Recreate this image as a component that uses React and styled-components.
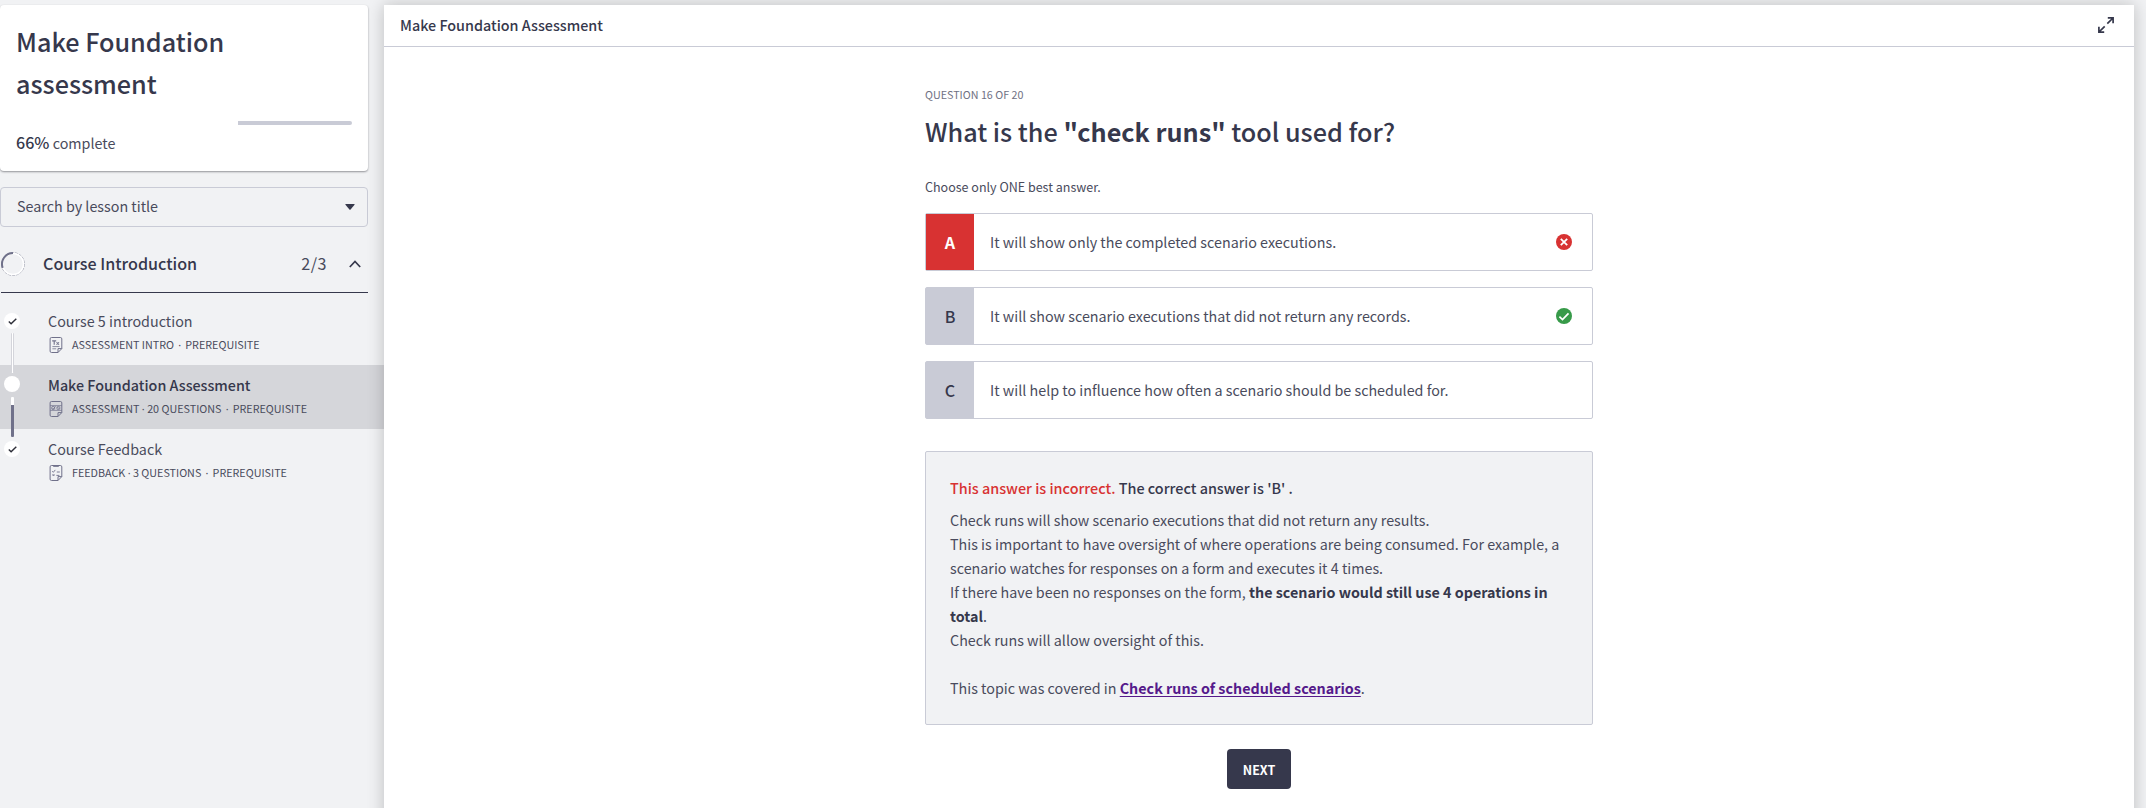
import React from "react";
import styled, { createGlobalStyle } from "styled-components";

const ink = "#36384c";
const body = "#494b5c";
const line = "#c9cbd6";
const paper = "#f1f2f4";

const GlobalStyle = createGlobalStyle`
  *, *::before, *::after { box-sizing: border-box; }
  body {
    margin: 0;
    background: ${paper};
    color: ${body};
    font-family: "Noto Sans CJK SC", "Noto Sans", sans-serif;
    font-size: 14.32px;
    line-height: 24px;
    overflow: hidden;
  }
`;

const Page = styled.div`
  display: flex;
  height: 808px;
  padding-top: 5px;
  overflow: hidden;
`;

const Sidebar = styled.aside`
  width: 384px;
  flex: none;
`;

const CourseCard = styled.section`
  width: 368px;
  height: 166px;
  padding: 15px 16px 0;
  background: #fff;
  border-radius: 4px;
  box-shadow: 0 1px 2px rgba(30, 32, 40, 0.45);
`;

const CourseTitle = styled.h1`
  width: 240px;
  margin: 0;
  color: ${ink};
  font-size: 25.2px;
  font-weight: 500;
  line-height: 42px;
`;

const ProgressTrack = styled.div`
  display: flex;
  justify-content: flex-end;
  height: 4px;
  margin-top: 17px;
`;

const ProgressRest = styled.div`
  width: 34%;
  background: ${line};
  border-radius: 0 2px 2px 0;
`;

const ProgressText = styled.p`
  margin: 6px 0 0;
  line-height: 24px;

  strong {
    color: ${ink};
    font-size: 16.1px;
    font-weight: 500;
    line-height: 1;
  }
`;

const SearchBox = styled.div`
  display: flex;
  align-items: center;
  justify-content: space-between;
  width: 368px;
  height: 40px;
  margin-top: 16px;
  padding: 0 12px 2px 16px;
  border: 1px solid ${line};
  border-radius: 4px;

  svg { margin-top: 1px; }
`;

const ChapterHeader = styled.header`
  display: flex;
  align-items: center;
  width: 367px;
  height: 66px;
  margin-left: 1px;
  padding: 8px 7px 0 0;
  border-bottom: 1px solid ${ink};
  font-size: 16.1px;
`;

const ChapterTitle = styled.h2`
  flex: 1;
  margin: 0 0 1px 18px;
  color: ${ink};
  font-size: inherit;
  font-weight: 500;
`;

const ChapterCount = styled.span`
  margin: 0 22px 1px 0;
  letter-spacing: 0.5px;
`;

const LessonList = styled.ul`
  margin: 8px 0 0;
  padding: 0;
  list-style: none;
`;

const Lesson = styled.li`
  display: flex;
  height: 64px;
  background: ${(p) => (p.$active ? "#d5d6da" : "transparent")};
`;

const LessonRail = styled.div`
  display: flex;
  flex-direction: column;
  align-items: center;
  flex: none;
  width: 24px;
  margin-right: 24px;
  padding-top: ${(p) => p.$top}px;
`;

const Dot = styled.div`
  display: flex;
  align-items: center;
  justify-content: center;
  width: 16px;
  height: 16px;
  flex: none;
  border-radius: 50%;
  background: #fff;
`;

const Connector = styled.div`
  position: relative;
  z-index: 1;
  flex: none;
  width: 3px;
  height: 40px;
  margin-top: ${(p) => (p.$dark ? 5 : 4)}px;
  margin-left: 1px;
  border-radius: 1px;
  ${(p) =>
    p.$dark
      ? "background: linear-gradient(#fff 0 8px, #70718a 8px);"
      : "background: #fff; border: solid #d4d5db; border-width: 0 0.6px;"}
`;

const LessonBody = styled.div`
  padding-top: 8px;
`;

const LessonTitle = styled.div`
  color: ${(p) => (p.$active ? ink : body)};
  font-weight: ${(p) => (p.$active ? 500 : 400)};
`;

const LessonMeta = styled.div`
  display: flex;
  align-items: center;
  gap: 8px;
  height: 16px;
  margin-top: 4px;
  font-size: 10.76px;
  line-height: 16px;
`;

const Mid = styled.span`
  font-family: "Noto Sans", sans-serif;
  margin: 0 ${(p) => (p.$wide ? 4.2 : 2.4)}px;
`;

const MetaText = styled.span`
  display: flex;
  white-space: pre;
`;

const Panel = styled.main`
  position: relative;
  width: 1750px;
  height: 860px;
  flex: none;
  background: #fff;
  box-shadow: 0 0 16px rgba(0, 0, 0, 0.22);
`;

const PanelHeader = styled.header`
  display: flex;
  align-items: center;
  justify-content: space-between;
  height: 42px;
  padding: 0 20px 2px 16px;
  border-bottom: 1px solid ${line};
  color: ${ink};
  font-size: 14.35px;
  font-weight: 500;
`;

const Question = styled.article`
  width: 668px;
  margin: 0 0 0 541px;
  padding-top: 40px;
`;

const Counter = styled.div`
  color: #6f7183;
  font-size: 10.74px;
  line-height: 16px;
`;

const QuestionTitle = styled.h2`
  margin: 7px 0 0;
  color: ${ink};
  font-size: 25.2px;
  font-weight: 500;
  line-height: 42px;

  strong { font-weight: 700; }
`;

const Hint = styled.p`
  margin: 25px 0 0;
  font-size: 12.53px;
  line-height: 20px;
`;

const Answers = styled.div`
  display: flex;
  flex-direction: column;
  gap: 16px;
  margin-top: 16px;
`;

const Answer = styled.div`
  display: flex;
  align-items: center;
  height: 58px;
  padding-right: 20px;
  border: 1px solid ${line};
  border-radius: 2px;
`;

const AnswerKey = styled.span`
  display: flex;
  align-items: center;
  justify-content: center;
  width: 48px;
  height: 56px;
  margin-right: 16px;
  background: ${(p) => (p.$wrong ? "#d83232" : line)};
  color: ${(p) => (p.$wrong ? "#fff" : ink)};
  font-size: 16.1px;
  font-weight: ${(p) => (p.$wrong ? 700 : 500)};
`;

const AnswerText = styled.span`
  flex: 1;
`;

const Feedback = styled.section`
  height: 274px;
  margin-top: 32px;
  padding: 24px;
  border: 1px solid ${line};
  border-radius: 2px;
  background: ${paper};

  p { margin: 0; }
  b { color: ${ink}; font-weight: 700; }
`;

const Verdict = styled.p`
  && { margin-bottom: 8px; }
  color: ${ink};
  font-size: 14.38px;
  font-weight: 500;

  span { color: #d83232; }
`;

const TopicLink = styled.a`
  color: #551a8b;
  font-weight: 700;
  text-decoration: underline;
  text-decoration-thickness: 1px;
  text-underline-offset: 2px;
`;

const NextButton = styled.button`
  display: block;
  width: 64px;
  height: 40px;
  margin: 24px auto 0;
  padding: 0;
  border: 0;
  border-radius: 4px;
  background: ${ink};
  color: #fff;
  font: 700 12.53px/39px "Noto Sans CJK SC", sans-serif;
`;

const Caret = () => (
  <svg width="10" height="6" viewBox="0 0 10 6">
    <path d="M0.8 0h8.4q.8 0 .3.7L5.6 5.4q-.6.6-1.2 0L.5.7Q0 0 .8 0z" fill={ink} />
  </svg>
);

const ChapterRing = () => (
  <svg width="24" height="24" viewBox="0 0 24 24" fill="none">
    <circle cx="12" cy="12" r="11.5" stroke="#a9abb8" strokeWidth="0.9" strokeDasharray="3 1" />
    <circle cx="12" cy="12" r="10.5" stroke="#fff" strokeWidth="1.4" />
    <path d="M1.7 15.8A11 11 0 0 1 12 1" stroke="#70718a" strokeWidth="2" />
  </svg>
);

const ChevronUp = () => (
  <svg width="12" height="8" viewBox="0 0 12 8" fill="none">
    <path d="M0.8 7L6 1.4 11.2 7" stroke={ink} strokeWidth="1.7" />
  </svg>
);

const Tick = () => (
  <svg width="9" height="7" viewBox="0 0 9 7" fill="none">
    <path d="M0.8 3.6L3.1 5.8 8.3 0.7" stroke="#2d2e38" strokeWidth="1.4" />
  </svg>
);

const Expand = () => (
  <svg width="16" height="16" viewBox="0 0 16 16" fill="none" stroke={ink} strokeWidth="1.7">
    <path d="M9.8 0.9h5.3v5.3M15 1L9.3 6.7M6.2 15.1H.9V9.8M1 15l5.7-5.7" />
  </svg>
);

const Wrong = () => (
  <svg width="16" height="16" viewBox="0 0 16 16">
    <circle cx="8" cy="8" r="8" fill="#d83232" />
    <path d="M4.8 4.8l6.4 6.4M11.2 4.8l-6.4 6.4" stroke="#fff" strokeWidth="1.8" />
  </svg>
);

const Right = () => (
  <svg width="16" height="16" viewBox="0 0 16 16">
    <circle cx="8" cy="8" r="8" fill="#379a49" />
    <path d="M3.4 8.6l3.1 2.9 6-6.2" fill="none" stroke="#fff" strokeWidth="1.7" />
  </svg>
);

const sheet = "M2.3 .5h8.9q1.4 0 1.4 1.4v9.7l-3.8 3.9H2.3Q.9 15.5.9 14.1V1.9Q.9.5 2.3.5zM12.6 11.6H8.8v3.9";

const MetaIcon = ({ kind }) => (
  <svg width="16" height="16" viewBox="-1.2 0 16 16" fill="none" stroke="#70718a" strokeWidth="1">
    <path d={sheet} />
    {kind === "intro" && (
      <>
        <path d="M3 3.9h4M5 3.9v3.8M7.3 5.3l2.5 2.4M9.8 5.3L7.3 7.7" strokeWidth="1.1" />
        <path d="M3.2 9.6h7.2M3.2 11.8h3.8" strokeWidth="0.8" />
      </>
    )}
    {kind === "assessment" && (
      <path
        d="M1 4.7h11.6M1 9.3h11.6M2.4 7a1.6 1.6 0 1 0 3.2 0a1.6 1.6 0 1 0-3.2 0M3.2 7l.8.8L6.4 5.3M7.6 7a1.6 1.6 0 1 0 3.2 0a1.6 1.6 0 1 0-3.2 0M8.2 6l2 2"
        strokeWidth="0.8"
      />
    )}
    {kind === "feedback" && (
      <>
        <path d="M4 .9h5.6" strokeWidth="1.9" />
        <path d="M3 6.2l1.1 1.1 2-2.4M7.6 7h3M3.4 9.2l1.8 1.8M5.2 9.2l-1.8 1.8M7.2 10.4h3" strokeWidth="0.9" />
      </>
    )}
  </svg>
);

const lessons = [
  { title: "Course 5 introduction", kind: "intro", meta: ["ASSESSMENT INTRO"], top: 12, done: true },
  { title: "Make Foundation Assessment", kind: "assessment", meta: ["ASSESSMENT", "20 QUESTIONS"], top: 11, active: true },
  { title: "Course Feedback", kind: "feedback", meta: ["FEEDBACK", "3 QUESTIONS"], top: 12, done: true },
];

const answers = [
  { key: "A", text: "It will show only the completed scenario executions.", state: "wrong" },
  { key: "B", text: "It will show scenario executions that did not return any records.", state: "right" },
  { key: "C", text: "It will help to influence how often a scenario should be scheduled for." },
];

export default function App() {
  return (
    <>
      <GlobalStyle />
      <Page>
        <Sidebar>
          <CourseCard>
            <CourseTitle>Make Foundation assessment</CourseTitle>
            <ProgressTrack>
              <ProgressRest />
            </ProgressTrack>
            <ProgressText>
              <strong>66%</strong> complete
            </ProgressText>
          </CourseCard>
          <SearchBox>
            Search by lesson title
            <Caret />
          </SearchBox>
          <ChapterHeader>
            <ChapterRing />
            <ChapterTitle>Course Introduction</ChapterTitle>
            <ChapterCount>2/3</ChapterCount>
            <ChevronUp />
          </ChapterHeader>
          <LessonList>
            {lessons.map((l, i) => (
              <Lesson key={l.title} $active={l.active}>
                <LessonRail $top={l.top}>
                  <Dot>{l.done && <Tick />}</Dot>
                  {i < lessons.length - 1 && <Connector $dark={l.active} />}
                </LessonRail>
                <LessonBody>
                  <LessonTitle $active={l.active}>{l.title}</LessonTitle>
                  <LessonMeta>
                    <MetaIcon kind={l.kind} />
                    <MetaText>
                      {l.meta[0]}
                      {l.meta[1] && (
                        <>
                          <Mid>·</Mid>
                          {l.meta[1]}
                        </>
                      )}
                      <Mid $wide>·</Mid>
                      PREREQUISITE
                    </MetaText>
                  </LessonMeta>
                </LessonBody>
              </Lesson>
            ))}
          </LessonList>
        </Sidebar>
        <Panel>
          <PanelHeader>
            <span>Make Foundation Assessment</span>
            <Expand />
          </PanelHeader>
          <Question>
            <Counter>QUESTION 16 OF 20</Counter>
            <QuestionTitle>
              What is the <strong>"check runs"</strong> tool used for?
            </QuestionTitle>
            <Hint>Choose only ONE best answer.</Hint>
            <Answers>
              {answers.map((a) => (
                <Answer key={a.key}>
                  <AnswerKey $wrong={a.state === "wrong"}>{a.key}</AnswerKey>
                  <AnswerText>{a.text}</AnswerText>
                  {a.state === "wrong" && <Wrong />}
                  {a.state === "right" && <Right />}
                </Answer>
              ))}
            </Answers>
            <Feedback>
              <Verdict>
                <span>This answer is incorrect.</span> The correct answer is 'B' .
              </Verdict>
              <p>Check runs will show scenario executions that did not return any results.</p>
              <p>
                This is important to have oversight of where operations are being consumed. For example, a scenario
                watches for responses on a form and executes it 4 times.
              </p>
              <p>
                If there have been no responses on the form, <b>the scenario would still use 4 operations in total</b>.
              </p>
              <p>Check runs will allow oversight of this.</p>
              <br />
              <p>
                This topic was covered in <TopicLink href="#">Check runs of scheduled scenarios</TopicLink>.
              </p>
            </Feedback>
            <NextButton>NEXT</NextButton>
          </Question>
        </Panel>
      </Page>
    </>
  );
}
